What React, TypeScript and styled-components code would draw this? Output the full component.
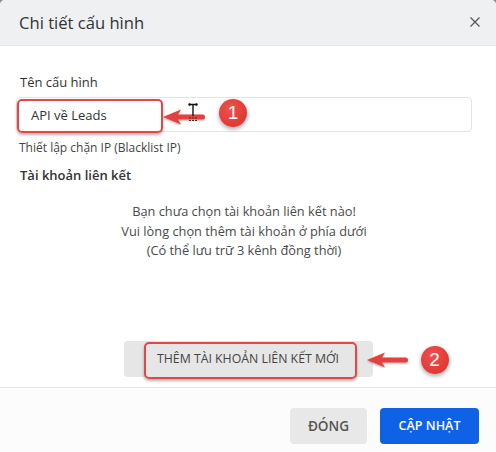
import styled, { createGlobalStyle } from 'styled-components'

const GlobalStyle = createGlobalStyle`
  html, body {
    margin: 0;
    padding: 0;
    background: #8a8d91;
  }
  body {
    font-family: "Open Sans", "Liberation Sans", sans-serif;
  }
  * {
    box-sizing: border-box;
  }
`

const Modal = styled.div`
  width: 496px;
  height: 452px;
  background: #fff;
  border-radius: 5px 5px 0 0;
  overflow: hidden;
  display: flex;
  flex-direction: column;
`

const Header = styled.div`
  height: 46px;
  flex-shrink: 0;
  background: #eef0f2;
  border-bottom: 1px solid #e2e4e6;
  display: flex;
  align-items: center;
  justify-content: space-between;
  padding: 0 10px 0 19px;
`

const Title = styled.h2`
  margin: 0;
  font-size: 16.6px;
  font-weight: 400;
  color: #333;
  padding-bottom: 1px;
`

const CloseButton = styled.button`
  background: none;
  border: none;
  padding: 0;
  width: 10px;
  height: 10px;
  margin-right: 6px;
  margin-bottom: 2px;
  cursor: pointer;
  display: flex;
  align-items: center;
  justify-content: center;
`

const Body = styled.div`
  padding: 27px 24px 0 16px;
  display: flex;
  flex-direction: column;
`

const Label = styled.label`
  font-size: 13px;
  line-height: 18px;
  color: #333;
  padding-left: 4px;
  margin-bottom: 6px;
`

const InputWrapper = styled.div`
  position: relative;
`

const Input = styled.input`
  width: 100%;
  height: 35px;
  border: 1px solid #e4e4e4;
  border-radius: 4px;
  padding: 0 14px;
  font-family: inherit;
  font-size: 13px;
  color: #333;
  background: #fff;
  outline: none;
`

const Highlight = styled.div<{ $left: number; $top: number; $width: number; $height: number }>`
  position: absolute;
  left: ${p => p.$left}px;
  top: ${p => p.$top}px;
  width: ${p => p.$width}px;
  height: ${p => p.$height}px;
  border: 2.5px solid #e2484a;
  border-radius: 5px;
  box-shadow: 0 2px 3px rgba(0, 0, 0, 0.3), inset 0 0 1px rgba(0, 0, 0, 0.1);
  pointer-events: none;
`

const Overlay = styled.div<{ $left: number; $top: number }>`
  position: absolute;
  left: ${p => p.$left}px;
  top: ${p => p.$top}px;
  pointer-events: none;
  display: flex;
`

const Badge = styled.div`
  width: 28px;
  height: 28px;
  border-radius: 50%;
  background: radial-gradient(circle at 40% 35%, #f0504c, #d92f2c);
  color: #fff;
  font-family: "Liberation Sans", Arial, sans-serif;
  font-size: 19px;
  line-height: 28px;
  text-align: center;
  box-shadow: 0 2px 4px rgba(0, 0, 0, 0.35);
`

const Hint = styled.div`
  font-size: 12px;
  line-height: 18px;
  color: #444;
  padding-left: 3px;
  margin-top: 7px;
`

const Section = styled.div`
  font-size: 13px;
  line-height: 18px;
  font-weight: 600;
  color: #333;
  padding-left: 4px;
  margin-top: 9px;
`

const Empty = styled.div`
  text-align: center;
  font-size: 12.8px;
  line-height: 19.5px;
  color: #4a4a4a;
  margin-top: 18px;
`

const AddRow = styled.div`
  display: flex;
  justify-content: center;
  margin-top: 80px;
  margin-bottom: 10px;
`

const AddWrapper = styled.div`
  position: relative;
`

const AddButton = styled.button`
  width: 249px;
  height: 36px;
  border: none;
  border-radius: 4px;
  background: #e6e6e6;
  color: #444;
  font-family: inherit;
  font-size: 12.3px;
  cursor: pointer;
`

const Footer = styled.div`
  flex: 1;
  border-top: 1px solid #e6e6e6;
  background: #fcfcfc;
  display: flex;
  justify-content: flex-end;
  align-items: flex-start;
  gap: 13px;
  padding: 20px 17px 0 0;
`

const FooterButton = styled.button<{ $primary?: boolean }>`
  height: 36px;
  min-width: ${p => (p.$primary ? 99 : 77)}px;
  border: none;
  border-radius: 4px;
  background: ${p => (p.$primary ? '#0f62e6' : '#e8e8e8')};
  color: ${p => (p.$primary ? '#fff' : '#555')};
  font-family: inherit;
  font-size: ${p => (p.$primary ? 12.6 : 13.6)}px;
  font-weight: 600;
  cursor: pointer;
`

const Arrow = ({ width }: { width: number }) => (
  <svg width={width} height="16" viewBox={`0 0 ${width} 16`}>
    <defs>
      <filter id={`sh${width}`} x="-20%" y="-40%" width="140%" height="180%">
        <feDropShadow dx="0" dy="1" stdDeviation="0.8" floodOpacity="0.35" />
      </filter>
    </defs>
    <path
      d={`M0 8 L18 0.5 L15 5.5 L${width - 2} 5.5 Q${width} 5.5 ${width} 8 Q${width} 10.5 ${width - 2} 10.5 L15 10.5 L18 15.5 Z`}
      fill="#e5413f"
      filter={`url(#sh${width})`}
    />
  </svg>
)

const TextCursor = () => (
  <svg width="10" height="19" viewBox="0 0 10 19">
    <path d="M1 1.5 H9 M5 1.5 V13" stroke="#111" strokeWidth="1.4" fill="none" />
    <path d="M1 15 H9 M1 17.5 H9" stroke="#333" strokeWidth="1" strokeDasharray="2 1" fill="none" />
    <circle cx="1.5" cy="1.5" r="1.2" fill="#111" />
    <circle cx="8.5" cy="1.5" r="1.2" fill="#111" />
  </svg>
)

export default function App() {
  return (
    <>
      <GlobalStyle />
      <Modal>
        <Header>
          <Title>Chi tiết cấu hình</Title>
          <CloseButton>
            <svg width="10" height="10" viewBox="0 0 10 10">
              <path d="M0.5 0.5 L9.5 9.5 M9.5 0.5 L0.5 9.5" stroke="#555" strokeWidth="1.2" />
            </svg>
          </CloseButton>
        </Header>
        <Body>
          <Label>Tên cấu hình</Label>
          <InputWrapper>
            <Input defaultValue="API về Leads" />
            <Highlight $left={1} $top={2} $width={146} $height={34} />
            <Overlay $left={147} $top={12}>
              <Arrow width={42} />
            </Overlay>
            <Overlay $left={172} $top={6}>
              <TextCursor />
            </Overlay>
            <Overlay $left={203} $top={2}>
              <Badge>1</Badge>
            </Overlay>
          </InputWrapper>
          <Hint>Thiết lập chặn IP (Blacklist IP)</Hint>
          <Section>Tài khoản liên kết</Section>
          <Empty>
            Bạn chưa chọn tài khoản liên kết nào!
            <br />
            Vui lòng chọn thêm tài khoản ở phía dưới
            <br />
            (Có thể lưu trữ 3 kênh đồng thời)
          </Empty>
        </Body>
        <AddRow>
          <AddWrapper>
            <AddButton>THÊM TÀI KHOẢN LIÊN KẾT MỚI</AddButton>
            <Highlight $left={20} $top={1} $width={213} $height={37} />
            <Overlay $left={243} $top={11}>
              <Arrow width={41} />
            </Overlay>
            <Overlay $left={297} $top={5}>
              <Badge>2</Badge>
            </Overlay>
          </AddWrapper>
        </AddRow>
        <Footer>
          <FooterButton>ĐÓNG</FooterButton>
          <FooterButton $primary>CẬP NHẬT</FooterButton>
        </Footer>
      </Modal>
    </>
  )
}
